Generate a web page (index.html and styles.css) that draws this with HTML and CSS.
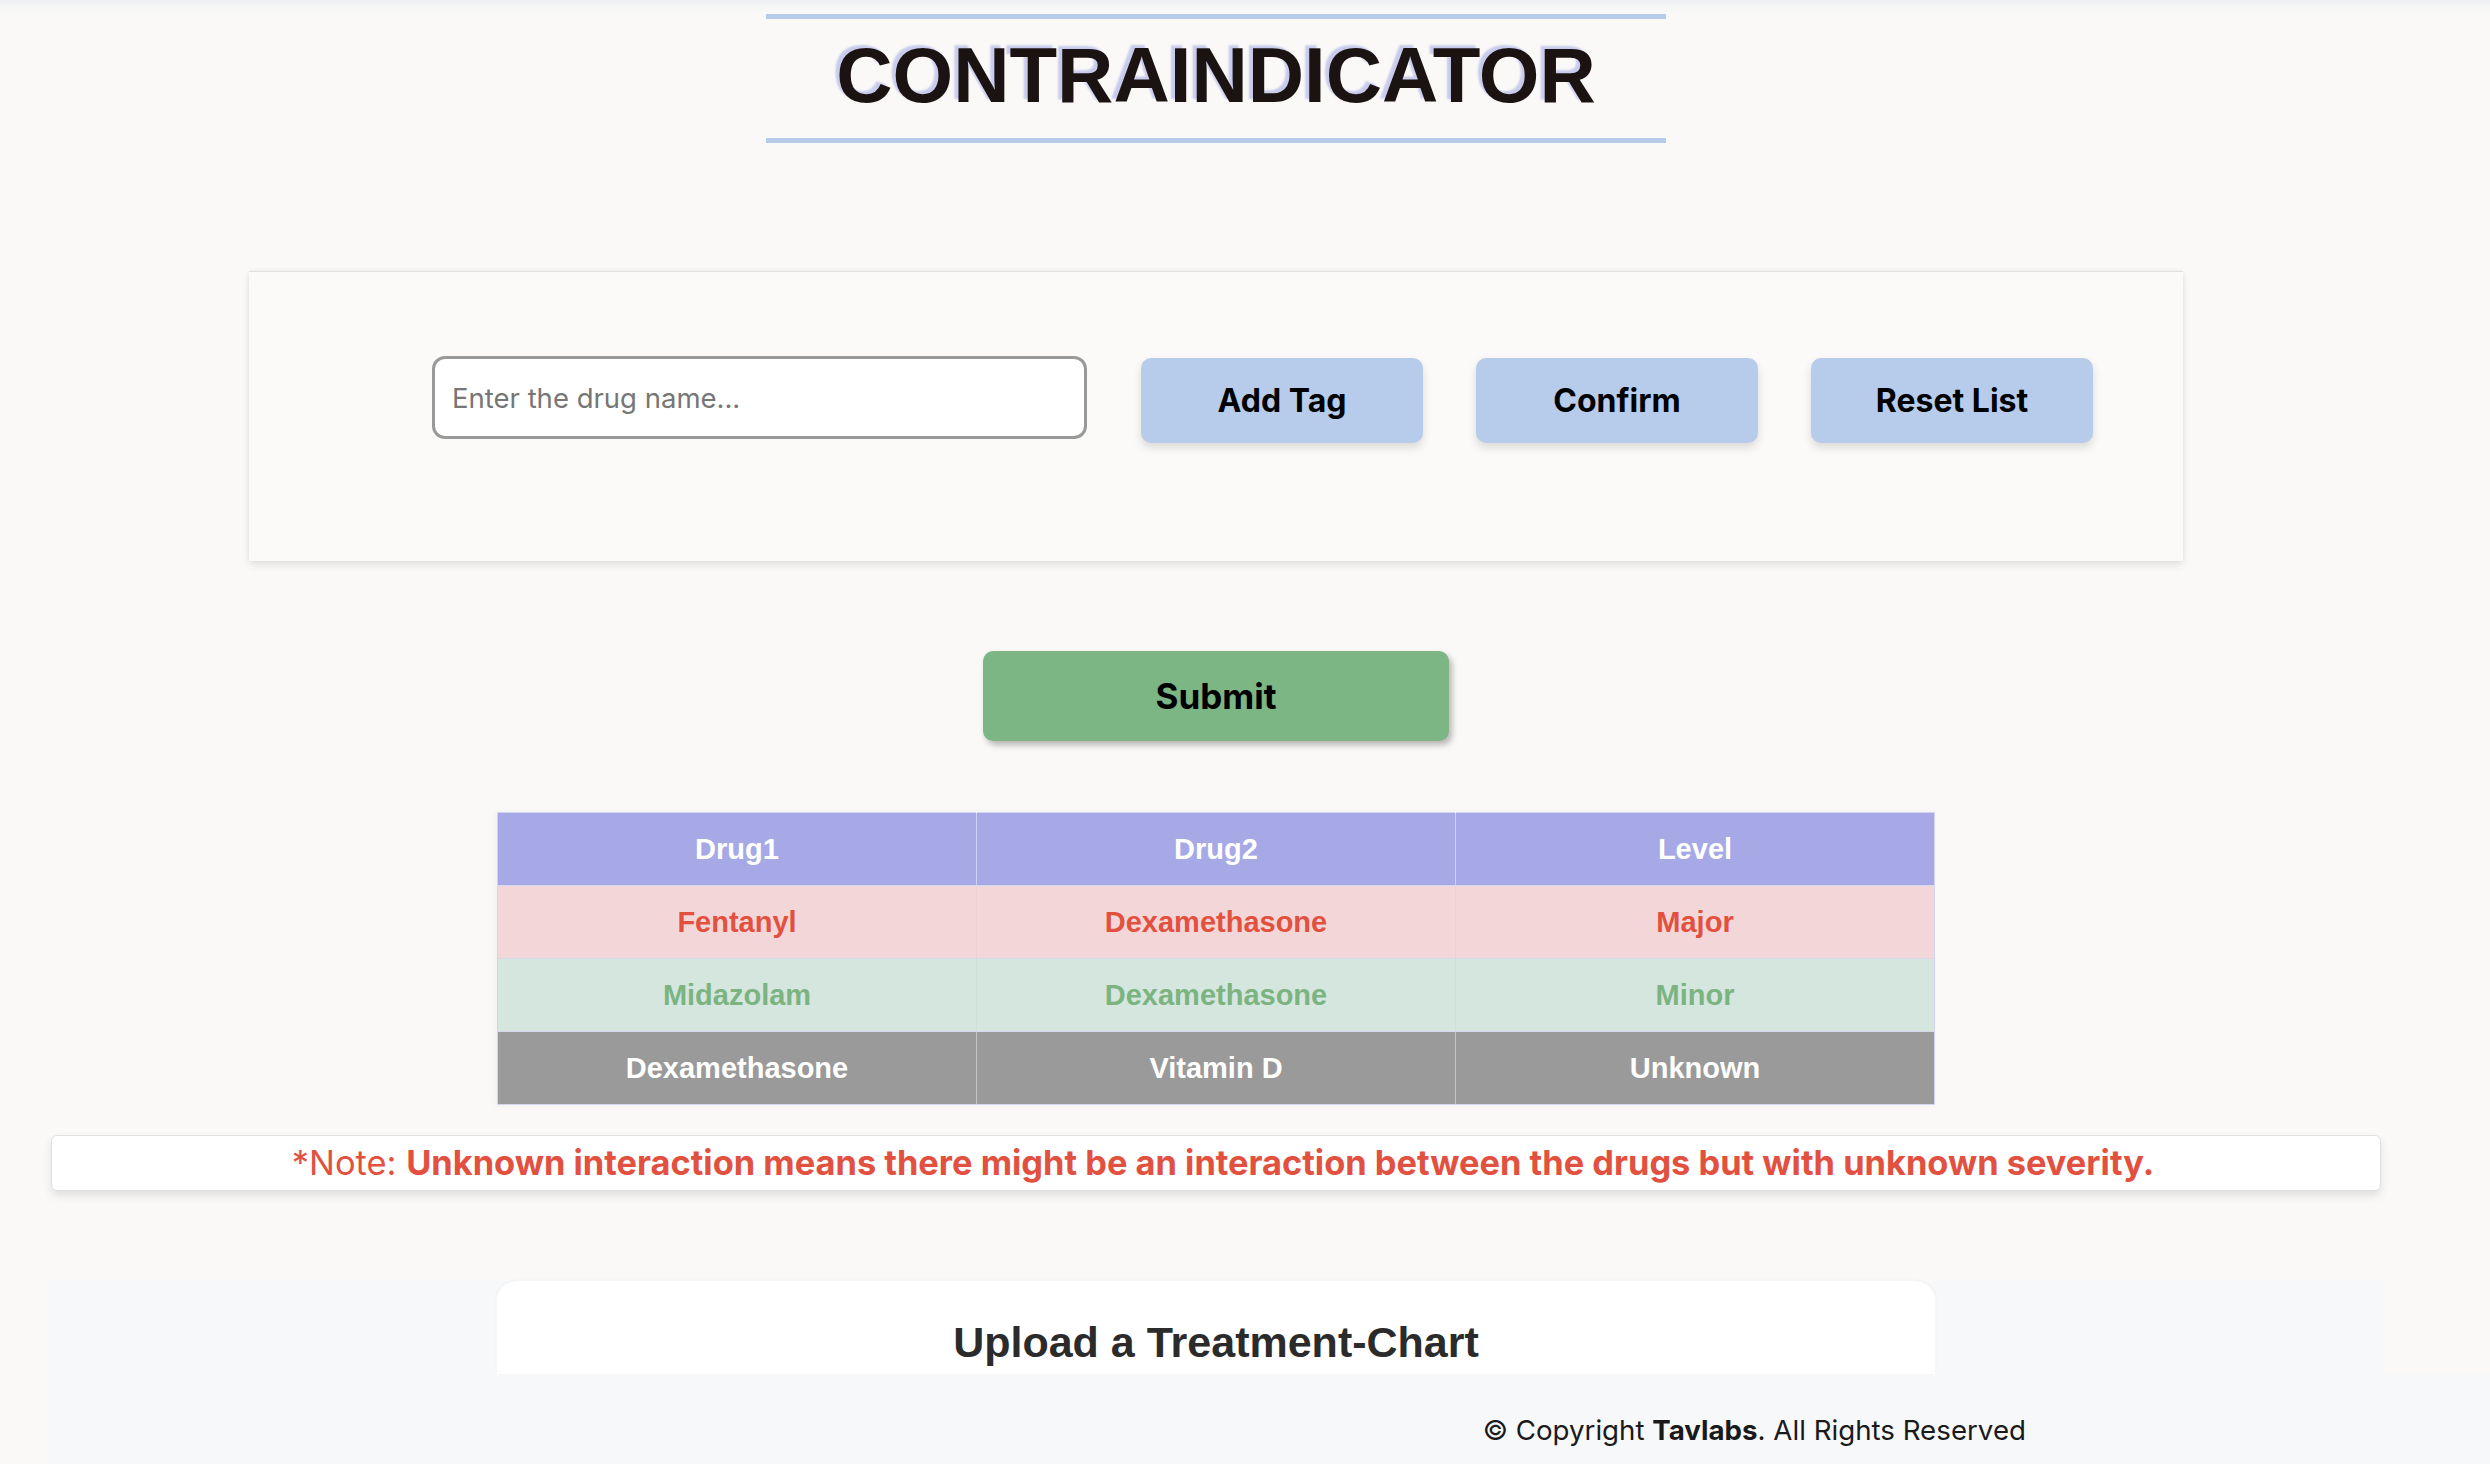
FILE: index.html
```html
<!DOCTYPE html>
<html lang="en">
<head>
<meta charset="utf-8">
<title>Contraindicator</title>
<link rel="stylesheet" href="styles.css">
</head>
<body>
<main class="page">
  <header class="brand">
    <h1 class="brand-title">CONTRAINDICATOR</h1>
  </header>

  <section class="entry-card">
    <div class="entry-row">
      <input class="drug-input" type="text" placeholder="Enter the drug name...">
      <button class="btn-blue">Add Tag</button>
      <button class="btn-blue">Confirm</button>
      <button class="btn-blue">Reset List</button>
    </div>
  </section>

  <div class="submit-wrap">
    <button class="btn-submit">Submit</button>
  </div>

  <table class="result-table">
    <thead>
      <tr><th>Drug1</th><th>Drug2</th><th>Level</th></tr>
    </thead>
    <tbody>
      <tr class="row-major"><td>Fentanyl</td><td>Dexamethasone</td><td>Major</td></tr>
      <tr class="row-minor"><td>Midazolam</td><td>Dexamethasone</td><td>Minor</td></tr>
      <tr class="row-unknown"><td>Dexamethasone</td><td>Vitamin D</td><td>Unknown</td></tr>
    </tbody>
  </table>

  <p class="note">*Note: <strong>Unknown interaction means there might be an interaction between the drugs but with unknown severity.</strong></p>

  <section class="upload">
    <div class="upload-card">
      <h2 class="upload-title">Upload a Treatment-Chart</h2>
    </div>
  </section>
</main>
<footer class="site-footer">
  <span>© Copyright <strong>Tavlabs</strong>. All Rights Reserved</span>
</footer>
</body>
</html>
```

FILE: styles.css
```css
html, body {
  margin: 0;
  padding: 0;
}

body {
  background: linear-gradient(#eeeff1 0px, #f7f7f7 8px, #faf9f8 16px) no-repeat, #faf9f8;
  font-family: Inter, "Noto Sans", sans-serif;
  color: #000;
  width: 2490px;
  height: 1464px;
  overflow: hidden;
}

.page {
  margin-left: 49px;
  width: 2334px;
  text-align: center;
}

.brand {
  display: flex;
  justify-content: center;
  padding-top: 14px;
}

.brand-title {
  width: 900px;
  margin: 0;
  border-top: 5px solid #b5cbe9;
  border-bottom: 5px solid #b5cbe9;
  height: 119px;
  box-sizing: content-box;
  line-height: 113px;
  font-family: "Liberation Sans", Arial, sans-serif;
  font-weight: 700;
  font-size: 78px;
  color: #1b1212;
  text-shadow: -4px -3px 2px rgba(160, 166, 226, 0.55);
}

.entry-card {
  margin: 128px 200px 0;
  height: 290px;
  box-sizing: border-box;
  background: #fbfaf8;
  border-top: 1px solid #e3e1df;
  box-shadow: 0 4px 8px rgba(0, 0, 0, 0.09), 0 0 4px rgba(0, 0, 0, 0.05);
  padding: 84px 0 0 183px;
}

.entry-row {
  display: flex;
  align-items: flex-start;
  gap: 53px;
}

.drug-input {
  width: 655px;
  height: 83px;
  box-sizing: border-box;
  border: 3px solid #999;
  border-radius: 13px;
  background: #fff;
  padding: 0 17px;
  font-family: Inter, "Noto Sans", sans-serif;
  font-size: 27.5px;
  color: #333;
  outline: none;
  margin-right: 1px;
}

.drug-input::placeholder {
  color: #767676;
}

.btn-blue {
  width: 282px;
  height: 85px;
  margin-top: 2px;
  border: none;
  border-radius: 10px;
  background: #b7cceb;
  box-shadow: 0 5px 10px rgba(0, 0, 0, 0.13);
  font-family: Inter, "Noto Sans", sans-serif;
  font-weight: 700;
  font-size: 32px;
  color: #000;
  padding: 0;
}

.submit-wrap {
  display: flex;
  justify-content: center;
  margin-top: 90px;
}

.btn-submit {
  width: 466px;
  height: 90px;
  border: none;
  border-radius: 10px;
  background: #7db685;
  box-shadow: 3px 4px 6px rgba(0, 0, 0, 0.28);
  font-family: Inter, "Noto Sans", sans-serif;
  font-weight: 700;
  font-size: 35px;
  color: #000;
  padding: 0;
}

.result-table {
  margin: 71px auto 0;
  width: 1438px;
  border-collapse: collapse;
  table-layout: fixed;
  font-family: "Liberation Sans", Arial, sans-serif;
  font-weight: 700;
  font-size: 29px;
  border: 1px solid #d3d5ef;
  box-shadow: -2px 0 6px rgba(0, 0, 0, 0.04);
}

.result-table th,
.result-table td {
  height: 72px;
  padding: 0;
  text-align: center;
  vertical-align: middle;
  border-left: 1px solid rgba(255, 255, 255, 0.45);
  border-bottom: 1px solid #d6d8ef;
}

.result-table th:first-child,
.result-table td:first-child {
  border-left: none;
}

.result-table thead tr {
  background: #a6a9e6;
  color: #fff;
}

.row-major {
  background: #f3d7d8;
  color: #e2513f;
}

.row-major td {
  border-left-color: #ead2d3;
}

.row-minor {
  background: #d5e6df;
  color: #7bb481;
}

.row-minor td {
  border-left-color: #cfdfd8;
}

.row-unknown {
  background: #9a9a9a;
  color: #fff;
}

.row-unknown td {
  border-left-color: #c4c4c4;
}

.note {
  margin: 30px 2px 0;
  height: 56px;
  box-sizing: border-box;
  background: #fff;
  border: 1px solid #e0e0e0;
  border-radius: 6px;
  box-shadow: 0 5px 8px rgba(0, 0, 0, 0.1);
  padding-left: 14px;
  color: #e2513f;
  font-family: Inter, "Noto Sans", sans-serif;
  font-size: 34.4px;
  line-height: 54px;
  font-weight: 400;
  white-space: nowrap;
}

.note strong {
  font-weight: 700;
}

.upload {
  margin-top: 90px;
  background: #f7f8fa;
  display: flex;
  justify-content: center;
}

.upload-card {
  width: 1438px;
  height: 93px;
  background: #fff;
  border-radius: 20px 20px 0 0;
  box-shadow: 0 -1px 4px rgba(0, 0, 0, 0.03);
  box-sizing: border-box;
  padding-top: 36px;
}

.upload-title {
  margin: 0;
  font-family: "Liberation Sans", Arial, sans-serif;
  font-weight: 700;
  font-size: 43px;
  line-height: 50px;
  color: #2b2b2b;
}

.site-footer {
  margin-left: 49px;
  height: 91px;
  background: #f7f8fa;
  display: flex;
  align-items: center;
  justify-content: flex-end;
  padding-right: 464px;
  box-sizing: border-box;
  font-family: Inter, "Noto Sans", sans-serif;
  font-size: 27.7px;
  color: #1a1a1a;
}

.site-footer span {
  padding-top: 20px;
}

.site-footer strong {
  font-weight: 700;
}
```
